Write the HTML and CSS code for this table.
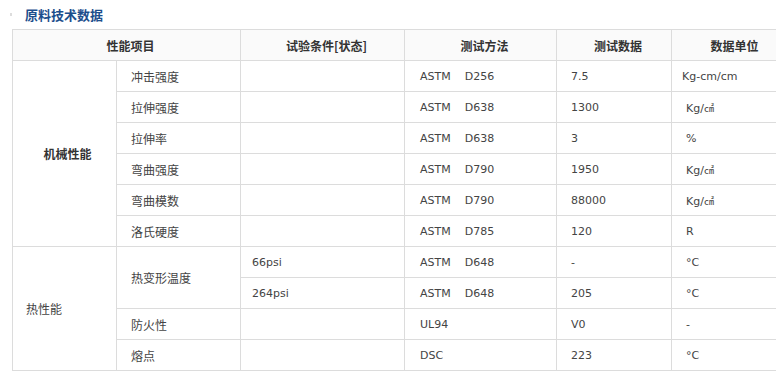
FILE: index.html
```html
<!DOCTYPE html>
<html lang="zh-CN">
<head>
    <meta charset="UTF-8">
    <meta name="viewport" content="width=device-width, initial-scale=1.0">
    <title>原料技术数据</title>
    <link rel="stylesheet" href="styles.css">
</head>
<body>

    <h3 class="title"><span class="dot"></span>原料技术数据</h3>

    <table class="data-table">
        <colgroup>
            <col style="width:104px">
            <col style="width:124px">
            <col style="width:164px">
            <col style="width:152px">
            <col style="width:115px">
            <col style="width:118px">
        </colgroup>
        <tr class="head">
            <th colspan="2">性能项目</th>
            <th>试验条件[状态]</th>
            <th>测试方法</th>
            <th>测试数据</th>
            <th>数据单位</th>
        </tr>
        <tr>
            <td rowspan="6" class="group zh">机械性能</td>
            <td class="zh">冲击强度</td>
            <td></td>
            <td class="method">ASTM&nbsp;&nbsp;&nbsp; D256</td>
            <td>7.5</td>
            <td class="unit">Kg-cm/cm</td>
        </tr>
        <tr>
            <td class="zh">拉伸强度</td>
            <td></td>
            <td class="method">ASTM&nbsp;&nbsp;&nbsp; D638</td>
            <td>1300</td>
            <td>Kg/<span class="cm2">㎠</span></td>
        </tr>
        <tr>
            <td class="zh">拉伸率</td>
            <td></td>
            <td class="method">ASTM&nbsp;&nbsp;&nbsp; D638</td>
            <td>3</td>
            <td>%</td>
        </tr>
        <tr>
            <td class="zh">弯曲强度</td>
            <td></td>
            <td class="method">ASTM&nbsp;&nbsp;&nbsp; D790</td>
            <td>1950</td>
            <td>Kg/<span class="cm2">㎠</span></td>
        </tr>
        <tr>
            <td class="zh">弯曲模数</td>
            <td></td>
            <td class="method">ASTM&nbsp;&nbsp;&nbsp; D790</td>
            <td>88000</td>
            <td>Kg/<span class="cm2">㎠</span></td>
        </tr>
        <tr>
            <td class="zh">洛氏硬度</td>
            <td></td>
            <td class="method">ASTM&nbsp;&nbsp;&nbsp; D785</td>
            <td>120</td>
            <td>R</td>
        </tr>
        <tr>
            <td rowspan="4" class="group-left zh">热性能</td>
            <td rowspan="2" class="zh">热变形温度</td>
            <td class="cond">66psi</td>
            <td class="method">ASTM&nbsp;&nbsp;&nbsp; D648</td>
            <td>-</td>
            <td>°C</td>
        </tr>
        <tr>
            <td class="cond">264psi</td>
            <td class="method">ASTM&nbsp;&nbsp;&nbsp; D648</td>
            <td>205</td>
            <td>°C</td>
        </tr>
        <tr>
            <td class="zh">防火性</td>
            <td></td>
            <td class="method">UL94</td>
            <td>V0</td>
            <td>-</td>
        </tr>
        <tr>
            <td class="zh">熔点</td>
            <td></td>
            <td class="method">DSC</td>
            <td>223</td>
            <td>°C</td>
        </tr>
    </table>

</body>
</html>
```

FILE: styles.css
```css
html, body {
    margin: 0;
    padding: 0;
    overflow: hidden;
    background: #fff;
}
body {
    font-family: "DejaVu Sans", "Noto Sans CJK SC", sans-serif;
    font-size: 12px;
    color: #444;
}
.title {
    position: relative;
    margin: 0;
    height: 29px;
    line-height: 30px;
    padding-left: 25px;
    font-family: "Noto Sans CJK SC", sans-serif;
    font-size: 13px;
    font-weight: bold;
    color: #1c4e8c;
}
.dot {
    position: absolute;
    left: 10px;
    top: 13px;
    width: 2px;
    height: 3px;
    background: #ddd;
}
.data-table {
    margin-left: 12px;
    width: 777px;
    table-layout: fixed;
    border-collapse: collapse;
}
.data-table th,
.data-table td {
    border: 1px solid #dcdcdc;
    height: 30px;
    padding: 0 0 0 14px;
    text-align: left;
    vertical-align: middle;
    white-space: nowrap;
    font-weight: normal;
}
.data-table td {
    font-family: "DejaVu Sans", "Noto Sans CJK SC", sans-serif;
    font-size: 11px;
}
.data-table td.zh {
    font-family: "Noto Sans CJK SC", sans-serif;
    font-size: 12px;
}
.data-table td:empty {
    padding: 0;
}
.head th {
    background: #fafafa;
    font-family: "Noto Sans CJK SC", sans-serif;
    font-size: 12px;
    font-weight: bold;
    color: #333;
    text-align: center;
    padding: 0 0 0 8px;
}
.data-table td.group {
    text-align: center;
    padding-left: 6px;
    font-weight: bold;
    color: #333;
}
.data-table td.group-left {
    padding-left: 13px;
}
.data-table td.method {
    padding-left: 15px;
}
.data-table td.cond {
    padding-left: 11px;
}
.data-table td.unit {
    padding-left: 10px;
}
.cm2 {
    font-family: "Noto Sans CJK SC", sans-serif;
    font-size: 10px;
}
```
